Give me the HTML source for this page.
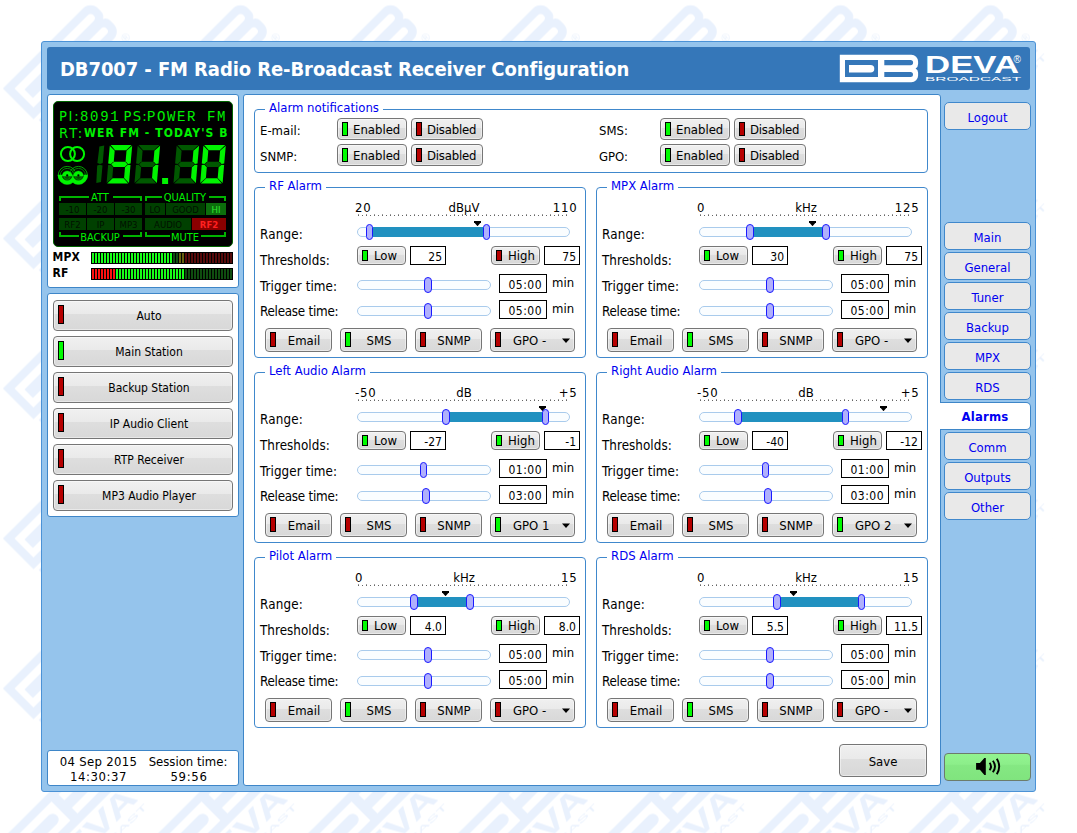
<!DOCTYPE html>
<html lang="en"><head><meta charset="utf-8"><title>DB7007 - FM Radio Re-Broadcast Receiver Configuration</title>
<style>
*{box-sizing:border-box;margin:0;padding:0}
html,body{width:1077px;height:833px;overflow:hidden;background:#fff}
body{position:relative;font-family:"DejaVu Sans Condensed","Liberation Sans",sans-serif;font-size:13px;color:#000;line-height:15px}
.abs,.abs *{position:absolute}
#bg{left:0;top:0;width:1077px;height:833px}
#wrap{left:41px;top:41px;width:995px;height:751px;border:1px solid #4b92d6;border-radius:3px;background:#95c4ec}
#hdr{left:47px;top:47px;width:983px;height:42.500px;background:#3577b9;border-radius:3px}
#title{left:60px;top:57px;font-size:20px;font-weight:bold;color:#fff;line-height:24px;white-space:nowrap;letter-spacing:-0.09px}
.panel{background:#fff;border:1px solid #3e86c8;border-radius:3px}
.t{white-space:nowrap;line-height:15px}
.btn{border:1px solid #767676;border-radius:4px;background:linear-gradient(#f0f0f0 0%,#eaeaea 44%,#dedede 45%,#d8d8d8 100%);box-shadow:inset 0 0 0 1px rgba(255,255,255,.45)}
.led{border:1px solid #000}
.g{background:#00fc00}
.r{background:#b60000}
.nav{left:944px;width:87px;height:28px;border:1px solid #4088cc;border-radius:5px;background:#e9e9e9;color:#0000f0;text-align:center;line-height:29px;position:absolute}
.fs{border:1px solid #4088cc;border-radius:4px}
.lg{background:#fff;color:#0000f0;padding:0 4px 0 4px;white-space:nowrap;line-height:15px;height:15px}
.inp{border:1px solid #000;background:#fff;text-align:right;font-size:12px;line-height:16px;padding-right:3px;padding-top:2px}
.trk{border:1px solid #a9cbec;border-radius:5px;background:#fafdff;height:10px}
.fill{background:#2191c0;height:10px}
.hd{width:8px;height:16px;border:1px solid #1a1aff;border-radius:4px;background:#b0b0fc}
.hd.n{width:7px;border-radius:3.5px}
.lbl{white-space:nowrap}
.lb{position:absolute;left:0;width:180px;height:31px;font-size:12px;text-align:center;padding-left:10px;line-height:31px}
</style></head>
<body>
<svg id="bg" class="abs" width="1077" height="833">
<defs><pattern id="wm" width="150" height="150" patternUnits="userSpaceOnUse" patternTransform="translate(2.9,-2.5)">
<g transform="translate(0,91) rotate(-45)" fill="#e9f1fd">
<path fill-rule="evenodd" d="M0 0H113.18A10.76 10.76 0 0 1 123.95 10.76V14.56Q123.95 19.31 119.99 21.53Q123.95 23.75 123.95 28.49V32.61A10.76 10.76 0 0 1 113.18 43.37H0Z M8.23 8.23V34.98H60.47V8.23Z M70.44 8.23V16.46H111.92A4.12 4.12 0 0 0 111.92 8.23Z M70.44 27.07V34.98H111.92A3.96 3.96 0 0 0 111.92 27.07Z"/><path d="M14.56 15.99H48.76A5.94 5.94 0 0 1 48.76 27.86H14.56Z"/>
<text x="0" y="68.500" font-family="'Liberation Sans',sans-serif" font-weight="bold" font-size="30.400" textLength="124" lengthAdjust="spacingAndGlyphs">DEVA</text>
<text x="0" y="80.300" font-family="'Liberation Sans',sans-serif" font-size="8" textLength="125" lengthAdjust="spacingAndGlyphs">BROADCAST</text>
<text x="118.500" y="54.800" font-family="'Liberation Sans',sans-serif" font-size="11.500">®</text>
</g>
</pattern></defs>
<rect x="2.900" y="0" width="1050" height="833" fill="url(#wm)"/></svg>
<div id="wrap" class="abs"></div>
<div id="hdr" class="abs"></div>
<div id="title" class="abs">DB7007 - FM Radio Re-Broadcast Receiver Configuration</div>
<svg class="abs" style="left:835px;top:48px" width="195" height="40">
<path fill="#fff" fill-rule="evenodd" d="M4.800 6.800H76.300A6.800 6.800 0 0 1 83.100 13.600V16Q83.100 19 80.600 20.400Q83.100 21.800 83.100 24.800V27.400A6.800 6.800 0 0 1 76.300 34.200H4.800Z M10 12V28.900H43V12Z M49.300 12V17.200H75.500A2.600 2.600 0 0 0 75.500 12Z M49.300 23.900V28.900H75.500A2.500 2.500 0 0 0 75.500 23.900Z"/>
<path fill="#fff" d="M14 16.900H35.600A3.700 3.750 0 0 1 35.600 24.400H14Z"/>
<text x="90.100" y="24.500" fill="#fff" font-family="'Liberation Sans',sans-serif" font-weight="bold" font-size="23" textLength="94" lengthAdjust="spacingAndGlyphs">DEVA</text>
<text x="90.100" y="33.300" fill="#fff" font-family="'Liberation Sans',sans-serif" font-size="6.200" textLength="96" lengthAdjust="spacingAndGlyphs">BROADCAST</text>
<text x="178.400" y="14.800" fill="#fff" font-family="'Liberation Sans',sans-serif" font-size="10">®</text>
</svg>
<div class="abs panel" style="left:47px;top:94px;width:192px;height:194px"></div>
<div class="abs panel" style="left:47px;top:293px;width:192px;height:224px"></div>
<div class="abs panel" style="left:47px;top:750px;width:192px;height:36px"></div>
<div class="abs panel" style="left:243px;top:94px;width:698px;height:692px"></div>
<div class="abs" style="left:53px;top:101px;width:180px;height:146px;background:#000;border:1px solid #006400;border-radius:5px"></div>
<div class="abs t" style="left:59px;top:106.500px;font-size:14.600px;line-height:17px;color:#00f000;letter-spacing:1.7px">PI:</div>
<div class="abs t" style="left:80px;top:109px;font-size:14px;line-height:17px;color:#00f000;font-family:'Liberation Mono',monospace;letter-spacing:1.7px">8091</div>
<div class="abs t" style="left:123.500px;top:106.500px;font-size:14.600px;line-height:17px;color:#00f000;letter-spacing:1.3px">PS:</div>
<div class="abs t" style="left:147px;top:109px;font-size:14px;line-height:17px;color:#00f000;font-family:'Liberation Mono',monospace;letter-spacing:1.6px;white-space:pre">POWER FM</div>
<div class="abs t" style="left:59px;top:124px;font-size:14.600px;line-height:17px;color:#00f000;letter-spacing:2.2px">RT:</div>
<div class="abs t" style="left:84px;top:126px;font-size:12px;line-height:15px;color:#00f000;font-weight:bold;letter-spacing:1.08px">WER FM - TODAY'S B</div>
<svg class="abs" style="left:53px;top:101px" width="180" height="146"><circle cx="14.9" cy="53.0" r="7" fill="none" stroke="#00f400" stroke-width="2"/><circle cx="24.1" cy="53.0" r="7" fill="none" stroke="#00f400" stroke-width="2"/><circle cx="14.2" cy="74.4" r="7" fill="none" stroke="#009000" stroke-width="0.9"/><circle cx="14.2" cy="74.4" r="9" fill="none" stroke="#00a800" stroke-width="1"/><circle cx="25.4" cy="74.4" r="7" fill="none" stroke="#009000" stroke-width="0.9"/><circle cx="25.4" cy="74.4" r="9" fill="none" stroke="#00a800" stroke-width="1"/><path d="M6.80 73.80A7.4 7.400 0 0 0 21.60 73.80" fill="none" stroke="#00f400" stroke-width="4.200"/><path d="M18.00 73.80A7.4 7.400 0 0 0 32.80 73.80" fill="none" stroke="#00f400" stroke-width="4.200"/><circle cx="14.2" cy="74.4" r="5.2" fill="#005000"/><path d="M11.20 75.40A3 3 0 0 0 17.20 75.40" fill="none" stroke="#008800" stroke-width="0.800"/><path d="M9.00 75.20A5.2 5.200 0 0 1 19.40 75.20Z" fill="#00f400"/><circle cx="14.2" cy="74.4" r="1.1" fill="#000"/><circle cx="25.4" cy="74.4" r="5.2" fill="#005000"/><path d="M22.40 75.40A3 3 0 0 0 28.40 75.40" fill="none" stroke="#008800" stroke-width="0.800"/><path d="M20.20 75.20A5.2 5.200 0 0 1 30.60 75.20Z" fill="#00f400"/><circle cx="25.4" cy="74.4" r="1.1" fill="#000"/><polygon points="46.4,45.5 51.2,44.6 49.7,62.1 47.0,62.9 44.4,62.1" fill="#005800"/><polygon points="44.2,64.5 46.9,63.7 49.5,64.5 48.0,81.1 43.3,82.0" fill="#005800"/><polygon points="57.6,44.0 78.6,44.0 73.2,49.3 62.1,49.3" fill="#00f400"/><polygon points="59.6,77.3 70.7,77.3 75.2,82.6 54.2,82.6" fill="#00f400"/><polygon points="56.8,44.7 61.7,49.7 60.8,60.3 57.9,62.9 55.2,62.6" fill="#00f400"/><polygon points="55.1,64.0 57.8,63.7 60.2,66.3 59.3,76.9 53.6,81.9" fill="#005800"/><polygon points="79.2,44.7 77.6,62.6 75.0,62.9 72.6,60.3 73.5,49.7" fill="#00f400"/><polygon points="77.5,64.0 76.0,81.9 71.1,76.9 72.0,66.3 74.9,63.7" fill="#00f400"/><polygon points="58.2,63.3 61.1,60.7 72.2,60.7 74.6,63.3 71.7,65.9 60.6,65.9" fill="#00f400"/><polygon points="85.5,44.0 106.5,44.0 101.1,49.3 90.0,49.3" fill="#005800"/><polygon points="87.5,77.3 98.6,77.3 103.1,82.6 82.1,82.6" fill="#005800"/><polygon points="84.7,44.7 89.6,49.7 88.7,60.3 85.8,62.9 83.1,62.6" fill="#005800"/><polygon points="83.0,64.0 85.7,63.7 88.1,66.3 87.2,76.9 81.5,81.9" fill="#005800"/><polygon points="107.1,44.7 105.5,62.6 102.9,62.9 100.5,60.3 101.4,49.7" fill="#00f400"/><polygon points="105.4,64.0 103.9,81.9 99.0,76.9 99.9,66.3 102.8,63.7" fill="#00f400"/><polygon points="86.1,63.3 89.0,60.7 100.1,60.7 102.5,63.3 99.6,65.9 88.5,65.9" fill="#005800"/><rect x="109.1" y="77.0" width="6" height="6" fill="#00f400"/><polygon points="124.5,44.0 145.5,44.0 140.1,49.3 129.0,49.3" fill="#005800"/><polygon points="126.5,77.3 137.6,77.3 142.1,82.6 121.1,82.6" fill="#005800"/><polygon points="123.7,44.7 128.6,49.7 127.7,60.3 124.8,62.9 122.1,62.6" fill="#005800"/><polygon points="122.0,64.0 124.7,63.7 127.1,66.3 126.2,76.9 120.5,81.9" fill="#005800"/><polygon points="146.1,44.7 144.5,62.6 141.9,62.9 139.5,60.3 140.4,49.7" fill="#00f400"/><polygon points="144.4,64.0 142.9,81.9 138.0,76.9 138.9,66.3 141.8,63.7" fill="#00f400"/><polygon points="125.1,63.3 128.0,60.7 139.1,60.7 141.5,63.3 138.6,65.9 127.5,65.9" fill="#005800"/><polygon points="151.2,44.0 172.2,44.0 166.8,49.3 155.7,49.3" fill="#00f400"/><polygon points="153.2,77.3 164.3,77.3 168.8,82.6 147.8,82.6" fill="#00f400"/><polygon points="150.4,44.7 155.3,49.7 154.4,60.3 151.5,62.9 148.8,62.6" fill="#00f400"/><polygon points="148.7,64.0 151.4,63.7 153.8,66.3 152.9,76.9 147.2,81.9" fill="#00f400"/><polygon points="172.8,44.7 171.2,62.6 168.6,62.9 166.2,60.3 167.1,49.7" fill="#00f400"/><polygon points="171.1,64.0 169.6,81.9 164.7,76.9 165.6,66.3 168.5,63.7" fill="#00f400"/><polygon points="151.8,63.3 154.7,60.7 165.8,60.7 168.2,63.3 165.3,65.9 154.2,65.9" fill="#005800"/><text x="60" y="80" font-size="30" font-family="'Liberation Mono',monospace" font-weight="bold" fill="#00f400" fill-opacity="0.02" textLength="120">91.10</text><path d="M7.0 100.0V96.0H36.0M60.0 96.0H88.0V100.0" fill="none" stroke="#00b400" stroke-width="2"/><path d="M93.0 100.0V96.0H109.0M156.0 96.0H172.0V100.0" fill="none" stroke="#00b400" stroke-width="2"/><path d="M7.0 131.0V135.0H26.0M70.0 135.0H88.0V131.0" fill="none" stroke="#00b400" stroke-width="2"/><path d="M93.0 131.0V135.0H117.0M148.0 135.0H172.0V131.0" fill="none" stroke="#00b400" stroke-width="2"/></svg>
<div class="abs t" style="left:60px;top:191px;width:80px;text-align:center;font-size:11px;line-height:13px;color:#00f000">ATT</div>
<div class="abs t" style="left:145px;top:191px;width:80px;text-align:center;font-size:11px;line-height:13px;color:#00f000">QUALITY</div>
<div class="abs t" style="left:60px;top:231px;width:80px;text-align:center;font-size:11px;line-height:13px;color:#00f000">BACKUP</div>
<div class="abs t" style="left:145px;top:231px;width:80px;text-align:center;font-size:11px;line-height:13px;color:#00f000">MUTE</div>
<div class="abs t" style="left:59px;top:203px;width:27px;height:12px;background:#004000;color:#001000;font-size:9.500px;line-height:14px;text-align:center;overflow:hidden;">-10</div>
<div class="abs t" style="left:87px;top:203px;width:27px;height:12px;background:#004000;color:#001000;font-size:9.500px;line-height:14px;text-align:center;overflow:hidden;">-20</div>
<div class="abs t" style="left:115px;top:203px;width:27px;height:12px;background:#004000;color:#001000;font-size:9.500px;line-height:14px;text-align:center;overflow:hidden;">-30</div>
<div class="abs t" style="left:145px;top:203px;width:20px;height:12px;background:#004000;color:#001000;font-size:9.500px;line-height:14px;text-align:center;overflow:hidden;">LO</div>
<div class="abs t" style="left:166px;top:203px;width:39px;height:12px;background:#004000;color:#001000;font-size:9.500px;line-height:14px;text-align:center;overflow:hidden;">GOOD</div>
<div class="abs t" style="left:206px;top:203px;width:20px;height:12px;background:#0c6e0c;color:#30e830;font-size:9.500px;line-height:14px;text-align:center;overflow:hidden;">HI</div>
<div class="abs t" style="left:59px;top:218px;width:27px;height:12px;background:#004000;color:#001000;font-size:9.500px;line-height:14px;text-align:center;overflow:hidden;">RF2</div>
<div class="abs t" style="left:87px;top:218px;width:27px;height:12px;background:#004000;color:#001000;font-size:9.500px;line-height:14px;text-align:center;overflow:hidden;">IP</div>
<div class="abs t" style="left:115px;top:218px;width:27px;height:12px;background:#004000;color:#001000;font-size:9.500px;line-height:14px;text-align:center;overflow:hidden;">MP3</div>
<div class="abs t" style="left:145px;top:218px;width:46px;height:12px;background:#004000;color:#001000;font-size:9.500px;line-height:14px;text-align:center;overflow:hidden;">AUDIO</div>
<div class="abs t" style="left:192px;top:218px;width:34px;height:12px;background:#8a0000;color:#ff2020;font-size:9.500px;line-height:14px;text-align:center;overflow:hidden;font-weight:bold;">RF2</div>
<div class="abs t" style="left:52.500px;top:250px;font-size:12px;font-weight:bold;letter-spacing:0.2px">MPX</div>
<div class="abs" style="left:91px;top:252px;width:142px;height:12px;background:#000"></div><svg class="abs" style="left:91px;top:252px" width="142" height="12"><rect x="1" y="1" width="2" height="10" fill="#18ff18"/><rect x="4" y="1" width="2" height="10" fill="#18ff18"/><rect x="7" y="1" width="2" height="10" fill="#18ff18"/><rect x="10" y="1" width="2" height="10" fill="#18ff18"/><rect x="13" y="1" width="2" height="10" fill="#18ff18"/><rect x="16" y="1" width="2" height="10" fill="#18ff18"/><rect x="19" y="1" width="2" height="10" fill="#18ff18"/><rect x="22" y="1" width="2" height="10" fill="#18ff18"/><rect x="25" y="1" width="2" height="10" fill="#18ff18"/><rect x="28" y="1" width="2" height="10" fill="#18ff18"/><rect x="31" y="1" width="2" height="10" fill="#18ff18"/><rect x="34" y="1" width="2" height="10" fill="#18ff18"/><rect x="37" y="1" width="2" height="10" fill="#18ff18"/><rect x="40" y="1" width="2" height="10" fill="#18ff18"/><rect x="43" y="1" width="2" height="10" fill="#18ff18"/><rect x="46" y="1" width="2" height="10" fill="#18ff18"/><rect x="49" y="1" width="2" height="10" fill="#18ff18"/><rect x="52" y="1" width="2" height="10" fill="#18ff18"/><rect x="55" y="1" width="2" height="10" fill="#18ff18"/><rect x="58" y="1" width="2" height="10" fill="#18ff18"/><rect x="61" y="1" width="2" height="10" fill="#18ff18"/><rect x="64" y="1" width="2" height="10" fill="#18ff18"/><rect x="67" y="1" width="2" height="10" fill="#18ff18"/><rect x="70" y="1" width="2" height="10" fill="#18ff18"/><rect x="73" y="1" width="2" height="10" fill="#18ff18"/><rect x="76" y="1" width="2" height="10" fill="#18ff18"/><rect x="79" y="1" width="2" height="10" fill="#18ff18"/><rect x="82" y="1" width="2" height="10" fill="#0f4d0f"/><rect x="85" y="1" width="2" height="10" fill="#0f4d0f"/><rect x="88" y="1" width="2" height="10" fill="#68600e"/><rect x="91" y="1" width="2" height="10" fill="#68600e"/><rect x="94" y="1" width="2" height="10" fill="#560a0a"/><rect x="97" y="1" width="2" height="10" fill="#560a0a"/><rect x="100" y="1" width="2" height="10" fill="#560a0a"/><rect x="103" y="1" width="2" height="10" fill="#560a0a"/><rect x="106" y="1" width="2" height="10" fill="#560a0a"/><rect x="109" y="1" width="2" height="10" fill="#560a0a"/><rect x="112" y="1" width="2" height="10" fill="#560a0a"/><rect x="115" y="1" width="2" height="10" fill="#560a0a"/><rect x="118" y="1" width="2" height="10" fill="#560a0a"/><rect x="121" y="1" width="2" height="10" fill="#560a0a"/><rect x="124" y="1" width="2" height="10" fill="#560a0a"/><rect x="127" y="1" width="2" height="10" fill="#560a0a"/><rect x="130" y="1" width="2" height="10" fill="#560a0a"/><rect x="133" y="1" width="2" height="10" fill="#560a0a"/><rect x="136" y="1" width="2" height="10" fill="#560a0a"/><rect x="139" y="1" width="2" height="10" fill="#560a0a"/></svg>
<div class="abs t" style="left:52.500px;top:266px;font-size:12px;font-weight:bold;letter-spacing:0.2px">RF</div>
<div class="abs" style="left:91px;top:268px;width:142px;height:12px;background:#000"></div><svg class="abs" style="left:91px;top:268px" width="142" height="12"><rect x="1" y="1" width="2" height="10" fill="#ff1010"/><rect x="4" y="1" width="2" height="10" fill="#ff1010"/><rect x="7" y="1" width="2" height="10" fill="#ff1010"/><rect x="10" y="1" width="2" height="10" fill="#ff1010"/><rect x="13" y="1" width="2" height="10" fill="#ff1010"/><rect x="16" y="1" width="2" height="10" fill="#ff1010"/><rect x="19" y="1" width="2" height="10" fill="#ff1010"/><rect x="22" y="1" width="2" height="10" fill="#ff1010"/><rect x="25" y="1" width="2" height="10" fill="#18ff18"/><rect x="28" y="1" width="2" height="10" fill="#18ff18"/><rect x="31" y="1" width="2" height="10" fill="#18ff18"/><rect x="34" y="1" width="2" height="10" fill="#18ff18"/><rect x="37" y="1" width="2" height="10" fill="#18ff18"/><rect x="40" y="1" width="2" height="10" fill="#18ff18"/><rect x="43" y="1" width="2" height="10" fill="#18ff18"/><rect x="46" y="1" width="2" height="10" fill="#18ff18"/><rect x="49" y="1" width="2" height="10" fill="#18ff18"/><rect x="52" y="1" width="2" height="10" fill="#18ff18"/><rect x="55" y="1" width="2" height="10" fill="#18ff18"/><rect x="58" y="1" width="2" height="10" fill="#18ff18"/><rect x="61" y="1" width="2" height="10" fill="#18ff18"/><rect x="64" y="1" width="2" height="10" fill="#18ff18"/><rect x="67" y="1" width="2" height="10" fill="#18ff18"/><rect x="70" y="1" width="2" height="10" fill="#18ff18"/><rect x="73" y="1" width="2" height="10" fill="#18ff18"/><rect x="76" y="1" width="2" height="10" fill="#18ff18"/><rect x="79" y="1" width="2" height="10" fill="#18ff18"/><rect x="82" y="1" width="2" height="10" fill="#18ff18"/><rect x="85" y="1" width="2" height="10" fill="#18ff18"/><rect x="88" y="1" width="2" height="10" fill="#18ff18"/><rect x="91" y="1" width="2" height="10" fill="#18ff18"/><rect x="94" y="1" width="2" height="10" fill="#0f4d0f"/><rect x="97" y="1" width="2" height="10" fill="#0f4d0f"/><rect x="100" y="1" width="2" height="10" fill="#0f4d0f"/><rect x="103" y="1" width="2" height="10" fill="#0f4d0f"/><rect x="106" y="1" width="2" height="10" fill="#0f4d0f"/><rect x="109" y="1" width="2" height="10" fill="#0f4d0f"/><rect x="112" y="1" width="2" height="10" fill="#0f4d0f"/><rect x="115" y="1" width="2" height="10" fill="#0f4d0f"/><rect x="118" y="1" width="2" height="10" fill="#0f4d0f"/><rect x="121" y="1" width="2" height="10" fill="#0f4d0f"/><rect x="124" y="1" width="2" height="10" fill="#0f4d0f"/><rect x="127" y="1" width="2" height="10" fill="#0f4d0f"/><rect x="130" y="1" width="2" height="10" fill="#0f4d0f"/><rect x="133" y="1" width="2" height="10" fill="#0f4d0f"/><rect x="136" y="1" width="2" height="10" fill="#0f4d0f"/><rect x="139" y="1" width="2" height="10" fill="#0f4d0f"/></svg>
<div class="abs btn" style="left:53px;top:300px;width:180px;height:31px"><div class="led r" style="left:4px;top:4px;width:6px;height:19px"></div><div class="lb" style="top:0">Auto</div></div>
<div class="abs btn" style="left:53px;top:336px;width:180px;height:31px"><div class="led g" style="left:4px;top:4px;width:6px;height:19px"></div><div class="lb" style="top:0">Main Station</div></div>
<div class="abs btn" style="left:53px;top:372px;width:180px;height:31px"><div class="led r" style="left:4px;top:4px;width:6px;height:19px"></div><div class="lb" style="top:0">Backup Station</div></div>
<div class="abs btn" style="left:53px;top:408px;width:180px;height:31px"><div class="led r" style="left:4px;top:4px;width:6px;height:19px"></div><div class="lb" style="top:0">IP Audio Client</div></div>
<div class="abs btn" style="left:53px;top:444px;width:180px;height:31px"><div class="led r" style="left:4px;top:4px;width:6px;height:19px"></div><div class="lb" style="top:0">RTP Receiver</div></div>
<div class="abs btn" style="left:53px;top:480px;width:180px;height:31px"><div class="led r" style="left:4px;top:4px;width:6px;height:19px"></div><div class="lb" style="top:0">MP3 Audio Player</div></div>
<div class="abs t" style="left:47px;top:754px;width:103px;text-align:center;letter-spacing:0.3px">04 Sep 2015</div>
<div class="abs t" style="left:47px;top:769px;width:103px;text-align:center;letter-spacing:0.55px">14:30:37</div>
<div class="abs t" style="left:137px;top:754px;width:102px;text-align:center">Session time:</div>
<div class="abs t" style="left:137px;top:769px;width:104px;text-align:center;letter-spacing:0.7px">59:56</div>
<div class="nav" style="top:102px">Logout</div>
<div class="nav" style="top:222px">Main</div>
<div class="nav" style="top:252px">General</div>
<div class="nav" style="top:282px">Tuner</div>
<div class="nav" style="top:312px">Backup</div>
<div class="nav" style="top:342px">MPX</div>
<div class="nav" style="top:372px">RDS</div>
<div class="abs" style="left:940px;top:402px;width:91px;height:28px;border:1px solid #3e86c8;border-left:none;border-radius:0 5px 5px 0;background:#fff;color:#0000f0;font-weight:bold;text-align:center;line-height:28px;padding-left:0px;letter-spacing:0.2px">Alarms</div>
<div class="nav" style="top:432px">Comm</div>
<div class="nav" style="top:462px">Outputs</div>
<div class="nav" style="top:492px">Other</div>
<div class="abs" style="left:944px;top:753px;width:87px;height:28px;border:1px solid #6c7c6c;border-radius:4px;background:linear-gradient(#92f490 0%,#8cee8a 40%,#85e883 42%,#80e47e 100%)"></div>
<svg class="abs" style="left:975px;top:757px" width="27" height="19">
<path d="M1.100 6H4.900L9.400 1.100H10.800V17.900H9.400L4.900 12.800H1.100Z" fill="#000"/>
<path d="M14.600 5.800Q17.400 9.500 14.600 13.200" fill="none" stroke="#000" stroke-width="1.900"/>
<path d="M17.800 3.700Q22.200 9.500 17.800 15.300" fill="none" stroke="#000" stroke-width="1.900"/>
<path d="M21.800 1.700Q26.600 9.500 21.800 17.300" fill="none" stroke="#000" stroke-width="1.900"/>
</svg>
<div class="abs btn" style="left:839px;top:744px;width:88px;height:33px;text-align:center;line-height:33px">Save</div>
<div class="abs fs" style="left:254px;top:109px;width:674px;height:64px"></div>
<div class="abs lg" style="left:265px;top:100px">Alarm notifications</div>
<div class="abs t" style="left:260px;top:123px">E-mail:</div>
<div class="abs t" style="left:260px;top:149px">SNMP:</div>
<div class="abs t" style="left:599px;top:123px">SMS:</div>
<div class="abs t" style="left:599px;top:149px">GPO:</div>
<div class="abs btn" style="left:337px;top:118px;width:70px;height:22px"><div class="led g" style="left:4px;top:3px;width:6px;height:14px"></div><div class="lbl" style="left:15px;top:3px;line-height:15px;">Enabled</div></div>
<div class="abs btn" style="left:411px;top:118px;width:72px;height:22px"><div class="led r" style="left:4px;top:3px;width:6px;height:14px"></div><div class="lbl" style="left:15px;top:3px;line-height:15px;letter-spacing:-0.2px">Disabled</div></div>
<div class="abs btn" style="left:337px;top:144px;width:70px;height:22px"><div class="led g" style="left:4px;top:3px;width:6px;height:14px"></div><div class="lbl" style="left:15px;top:3px;line-height:15px;">Enabled</div></div>
<div class="abs btn" style="left:411px;top:144px;width:72px;height:22px"><div class="led r" style="left:4px;top:3px;width:6px;height:14px"></div><div class="lbl" style="left:15px;top:3px;line-height:15px;letter-spacing:-0.2px">Disabled</div></div>
<div class="abs btn" style="left:660px;top:118px;width:70px;height:22px"><div class="led g" style="left:4px;top:3px;width:6px;height:14px"></div><div class="lbl" style="left:15px;top:3px;line-height:15px;">Enabled</div></div>
<div class="abs btn" style="left:734px;top:118px;width:72px;height:22px"><div class="led r" style="left:4px;top:3px;width:6px;height:14px"></div><div class="lbl" style="left:15px;top:3px;line-height:15px;letter-spacing:-0.2px">Disabled</div></div>
<div class="abs btn" style="left:660px;top:144px;width:70px;height:22px"><div class="led g" style="left:4px;top:3px;width:6px;height:14px"></div><div class="lbl" style="left:15px;top:3px;line-height:15px;">Enabled</div></div>
<div class="abs btn" style="left:734px;top:144px;width:72px;height:22px"><div class="led r" style="left:4px;top:3px;width:6px;height:14px"></div><div class="lbl" style="left:15px;top:3px;line-height:15px;letter-spacing:-0.2px">Disabled</div></div>
<div class="abs" style="left:254px;top:187px;width:332px;height:171px"><div class="fs" style="left:0;top:0;width:332px;height:171px"></div><div class="lg" style="left:11px;top:-9px">RF Alarm</div><div class="lbl" style="left:101px;top:13px;letter-spacing:0.8px">20</div><div class="lbl" style="left:160px;top:13px;width:100px;text-align:center">dBµV</div><div class="lbl" style="left:223.500px;top:13px;width:100px;text-align:right;letter-spacing:0.8px">110</div><div style="left:104px;top:28px;width:210px;height:1px;background:repeating-linear-gradient(90deg,#666 0 1px,transparent 1px 4px)"></div><div style="left:104px;top:27px;width:210px;height:1px;background:repeating-linear-gradient(90deg,#999 0 1px,transparent 1px 8px)"></div><svg style="left:220.0px;top:34px" width="7" height="5"><path d="M0 0H7V1.300L3.500 5.200L0 1.300Z" fill="#000"/></svg><div class="lbl" style="left:6px;top:40px;font-size:13.300px;letter-spacing:0.15px">Range:</div><div class="lbl" style="left:6px;top:66px;font-size:13.300px;letter-spacing:0.05px">Thresholds:</div><div class="lbl" style="left:6px;top:92px;font-size:13.300px;letter-spacing:0.1px">Trigger time:</div><div class="lbl" style="left:6px;top:117px;font-size:13.300px;letter-spacing:-0.25px">Release time:</div><div class="trk" style="left:103px;top:40px;width:213px"></div><div class="fill" style="left:115.5px;top:40px;width:117.0px"></div><div class="hd" style="left:112.0px;top:37px;width:7px;border-radius:3.5px"></div><div class="hd" style="left:229.0px;top:37px;width:7px;border-radius:3.5px"></div><div class="btn" style="left:103px;top:59px;width:49px;height:19px"><div class="led g" style="left:4px;top:3px;width:6px;height:11px"></div><div class="lbl" style="left:16px;top:1px;line-height:15px">Low</div></div><div class="inp" style="left:156px;top:59px;width:36px;height:19px">25</div><div class="btn" style="left:237px;top:59px;width:49px;height:19px"><div class="led r" style="left:4px;top:3px;width:6px;height:11px"></div><div class="lbl" style="left:16px;top:1px;line-height:15px">High</div></div><div class="inp" style="left:290px;top:59px;width:36px;height:19px">75</div><div class="trk" style="left:103px;top:93px;width:134px"></div><div class="hd" style="left:170.0px;top:90px;width:8px;border-radius:4.0px"></div><div class="inp" style="left:245px;top:87px;width:48px;height:19px;padding-right:4px;letter-spacing:0.5px">05:00</div><div class="lbl" style="left:298px;top:88px">min</div><div class="trk" style="left:103px;top:119px;width:134px"></div><div class="hd" style="left:170.0px;top:116px;width:8px;border-radius:4.0px"></div><div class="inp" style="left:245px;top:113px;width:48px;height:19px;padding-right:4px;letter-spacing:0.5px">05:00</div><div class="lbl" style="left:298px;top:114px">min</div><div class="btn" style="left:11px;top:141px;width:67px;height:24px"><div class="led r" style="left:4px;top:3px;width:6px;height:15px"></div><div class="lbl" style="left:11px;top:4px;width:54px;text-align:center;line-height:15px">Email</div></div><div class="btn" style="left:86px;top:141px;width:67px;height:24px"><div class="led g" style="left:4px;top:3px;width:6px;height:15px"></div><div class="lbl" style="left:11px;top:4px;width:54px;text-align:center;line-height:15px">SMS</div></div><div class="btn" style="left:161px;top:141px;width:67px;height:24px"><div class="led r" style="left:4px;top:3px;width:6px;height:15px"></div><div class="lbl" style="left:11px;top:4px;width:54px;text-align:center;line-height:15px">SNMP</div></div><div class="btn" style="left:236px;top:141px;width:85px;height:24px"><div class="led r" style="left:4px;top:3px;width:6px;height:15px"></div><div class="lbl" style="left:22px;top:4px;line-height:15px">GPO -</div><svg style="left:71px;top:9px" width="8" height="6"><path d="M0 0.500H8L4 5Z" fill="#000"/></svg></div></div>
<div class="abs" style="left:596px;top:187px;width:332px;height:171px"><div class="fs" style="left:0;top:0;width:332px;height:171px"></div><div class="lg" style="left:11px;top:-9px">MPX Alarm</div><div class="lbl" style="left:101px;top:13px;letter-spacing:0.8px">0</div><div class="lbl" style="left:160px;top:13px;width:100px;text-align:center">kHz</div><div class="lbl" style="left:223.500px;top:13px;width:100px;text-align:right;letter-spacing:0.8px">125</div><div style="left:104px;top:28px;width:210px;height:1px;background:repeating-linear-gradient(90deg,#666 0 1px,transparent 1px 4px)"></div><div style="left:104px;top:27px;width:210px;height:1px;background:repeating-linear-gradient(90deg,#999 0 1px,transparent 1px 8px)"></div><svg style="left:213.0px;top:34px" width="7" height="5"><path d="M0 0H7V1.300L3.500 5.200L0 1.300Z" fill="#000"/></svg><div class="lbl" style="left:6px;top:40px;font-size:13.300px;letter-spacing:0.15px">Range:</div><div class="lbl" style="left:6px;top:66px;font-size:13.300px;letter-spacing:0.05px">Thresholds:</div><div class="lbl" style="left:6px;top:92px;font-size:13.300px;letter-spacing:0.1px">Trigger time:</div><div class="lbl" style="left:6px;top:117px;font-size:13.300px;letter-spacing:-0.25px">Release time:</div><div class="trk" style="left:103px;top:40px;width:213px"></div><div class="fill" style="left:154.0px;top:40px;width:76.0px"></div><div class="hd" style="left:150.0px;top:37px;width:8px;border-radius:4.0px"></div><div class="hd" style="left:226.0px;top:37px;width:8px;border-radius:4.0px"></div><div class="btn" style="left:103px;top:59px;width:49px;height:19px"><div class="led g" style="left:4px;top:3px;width:6px;height:11px"></div><div class="lbl" style="left:16px;top:1px;line-height:15px">Low</div></div><div class="inp" style="left:156px;top:59px;width:36px;height:19px">30</div><div class="btn" style="left:237px;top:59px;width:49px;height:19px"><div class="led g" style="left:4px;top:3px;width:6px;height:11px"></div><div class="lbl" style="left:16px;top:1px;line-height:15px">High</div></div><div class="inp" style="left:290px;top:59px;width:36px;height:19px">75</div><div class="trk" style="left:103px;top:93px;width:134px"></div><div class="hd" style="left:170.0px;top:90px;width:8px;border-radius:4.0px"></div><div class="inp" style="left:245px;top:87px;width:48px;height:19px;padding-right:4px;letter-spacing:0.5px">05:00</div><div class="lbl" style="left:298px;top:88px">min</div><div class="trk" style="left:103px;top:119px;width:134px"></div><div class="hd" style="left:170.0px;top:116px;width:8px;border-radius:4.0px"></div><div class="inp" style="left:245px;top:113px;width:48px;height:19px;padding-right:4px;letter-spacing:0.5px">05:00</div><div class="lbl" style="left:298px;top:114px">min</div><div class="btn" style="left:11px;top:141px;width:67px;height:24px"><div class="led r" style="left:4px;top:3px;width:6px;height:15px"></div><div class="lbl" style="left:11px;top:4px;width:54px;text-align:center;line-height:15px">Email</div></div><div class="btn" style="left:86px;top:141px;width:67px;height:24px"><div class="led g" style="left:4px;top:3px;width:6px;height:15px"></div><div class="lbl" style="left:11px;top:4px;width:54px;text-align:center;line-height:15px">SMS</div></div><div class="btn" style="left:161px;top:141px;width:67px;height:24px"><div class="led r" style="left:4px;top:3px;width:6px;height:15px"></div><div class="lbl" style="left:11px;top:4px;width:54px;text-align:center;line-height:15px">SNMP</div></div><div class="btn" style="left:236px;top:141px;width:85px;height:24px"><div class="led r" style="left:4px;top:3px;width:6px;height:15px"></div><div class="lbl" style="left:22px;top:4px;line-height:15px">GPO -</div><svg style="left:71px;top:9px" width="8" height="6"><path d="M0 0.500H8L4 5Z" fill="#000"/></svg></div></div>
<div class="abs" style="left:254px;top:372px;width:332px;height:171px"><div class="fs" style="left:0;top:0;width:332px;height:171px"></div><div class="lg" style="left:11px;top:-9px">Left Audio Alarm</div><div class="lbl" style="left:101px;top:13px;letter-spacing:0.8px">-50</div><div class="lbl" style="left:160px;top:13px;width:100px;text-align:center">dB</div><div class="lbl" style="left:223.500px;top:13px;width:100px;text-align:right;letter-spacing:0.8px">+5</div><div style="left:104px;top:28px;width:210px;height:1px;background:repeating-linear-gradient(90deg,#666 0 1px,transparent 1px 4px)"></div><div style="left:104px;top:27px;width:210px;height:1px;background:repeating-linear-gradient(90deg,#999 0 1px,transparent 1px 8px)"></div><svg style="left:285.0px;top:34px" width="7" height="5"><path d="M0 0H7V1.300L3.500 5.200L0 1.300Z" fill="#000"/></svg><div class="lbl" style="left:6px;top:40px;font-size:13.300px;letter-spacing:0.15px">Range:</div><div class="lbl" style="left:6px;top:66px;font-size:13.300px;letter-spacing:0.05px">Thresholds:</div><div class="lbl" style="left:6px;top:92px;font-size:13.300px;letter-spacing:0.1px">Trigger time:</div><div class="lbl" style="left:6px;top:117px;font-size:13.300px;letter-spacing:-0.25px">Release time:</div><div class="trk" style="left:103px;top:40px;width:213px"></div><div class="fill" style="left:192.0px;top:40px;width:99.5px"></div><div class="hd" style="left:188.0px;top:37px;width:8px;border-radius:4.0px"></div><div class="hd" style="left:288.0px;top:37px;width:7px;border-radius:3.5px"></div><div class="btn" style="left:103px;top:59px;width:49px;height:19px"><div class="led g" style="left:4px;top:3px;width:6px;height:11px"></div><div class="lbl" style="left:16px;top:1px;line-height:15px">Low</div></div><div class="inp" style="left:156px;top:59px;width:36px;height:19px">-27</div><div class="btn" style="left:237px;top:59px;width:49px;height:19px"><div class="led g" style="left:4px;top:3px;width:6px;height:11px"></div><div class="lbl" style="left:16px;top:1px;line-height:15px">High</div></div><div class="inp" style="left:290px;top:59px;width:36px;height:19px">-1</div><div class="trk" style="left:103px;top:93px;width:134px"></div><div class="hd" style="left:166.0px;top:90px;width:7px;border-radius:3.5px"></div><div class="inp" style="left:245px;top:87px;width:48px;height:19px;padding-right:4px;letter-spacing:0.5px">01:00</div><div class="lbl" style="left:298px;top:88px">min</div><div class="trk" style="left:103px;top:119px;width:134px"></div><div class="hd" style="left:168.0px;top:116px;width:8px;border-radius:4.0px"></div><div class="inp" style="left:245px;top:113px;width:48px;height:19px;padding-right:4px;letter-spacing:0.5px">03:00</div><div class="lbl" style="left:298px;top:114px">min</div><div class="btn" style="left:11px;top:141px;width:67px;height:24px"><div class="led r" style="left:4px;top:3px;width:6px;height:15px"></div><div class="lbl" style="left:11px;top:4px;width:54px;text-align:center;line-height:15px">Email</div></div><div class="btn" style="left:86px;top:141px;width:67px;height:24px"><div class="led r" style="left:4px;top:3px;width:6px;height:15px"></div><div class="lbl" style="left:11px;top:4px;width:54px;text-align:center;line-height:15px">SMS</div></div><div class="btn" style="left:161px;top:141px;width:67px;height:24px"><div class="led r" style="left:4px;top:3px;width:6px;height:15px"></div><div class="lbl" style="left:11px;top:4px;width:54px;text-align:center;line-height:15px">SNMP</div></div><div class="btn" style="left:236px;top:141px;width:85px;height:24px"><div class="led g" style="left:4px;top:3px;width:6px;height:15px"></div><div class="lbl" style="left:22px;top:4px;line-height:15px">GPO 1</div><svg style="left:71px;top:9px" width="8" height="6"><path d="M0 0.500H8L4 5Z" fill="#000"/></svg></div></div>
<div class="abs" style="left:596px;top:372px;width:332px;height:171px"><div class="fs" style="left:0;top:0;width:332px;height:171px"></div><div class="lg" style="left:11px;top:-9px">Right Audio Alarm</div><div class="lbl" style="left:101px;top:13px;letter-spacing:0.8px">-50</div><div class="lbl" style="left:160px;top:13px;width:100px;text-align:center">dB</div><div class="lbl" style="left:223.500px;top:13px;width:100px;text-align:right;letter-spacing:0.8px">+5</div><div style="left:104px;top:28px;width:210px;height:1px;background:repeating-linear-gradient(90deg,#666 0 1px,transparent 1px 4px)"></div><div style="left:104px;top:27px;width:210px;height:1px;background:repeating-linear-gradient(90deg,#999 0 1px,transparent 1px 8px)"></div><svg style="left:284.0px;top:34px" width="7" height="5"><path d="M0 0H7V1.300L3.500 5.200L0 1.300Z" fill="#000"/></svg><div class="lbl" style="left:6px;top:40px;font-size:13.300px;letter-spacing:0.15px">Range:</div><div class="lbl" style="left:6px;top:66px;font-size:13.300px;letter-spacing:0.05px">Thresholds:</div><div class="lbl" style="left:6px;top:92px;font-size:13.300px;letter-spacing:0.1px">Trigger time:</div><div class="lbl" style="left:6px;top:117px;font-size:13.300px;letter-spacing:-0.25px">Release time:</div><div class="trk" style="left:103px;top:40px;width:213px"></div><div class="fill" style="left:142.0px;top:40px;width:107.5px"></div><div class="hd" style="left:138.0px;top:37px;width:8px;border-radius:4.0px"></div><div class="hd" style="left:246.0px;top:37px;width:7px;border-radius:3.5px"></div><div class="btn" style="left:103px;top:59px;width:49px;height:19px"><div class="led g" style="left:4px;top:3px;width:6px;height:11px"></div><div class="lbl" style="left:16px;top:1px;line-height:15px">Low</div></div><div class="inp" style="left:156px;top:59px;width:36px;height:19px">-40</div><div class="btn" style="left:237px;top:59px;width:49px;height:19px"><div class="led g" style="left:4px;top:3px;width:6px;height:11px"></div><div class="lbl" style="left:16px;top:1px;line-height:15px">High</div></div><div class="inp" style="left:290px;top:59px;width:36px;height:19px">-12</div><div class="trk" style="left:103px;top:93px;width:134px"></div><div class="hd" style="left:166.0px;top:90px;width:7px;border-radius:3.5px"></div><div class="inp" style="left:245px;top:87px;width:48px;height:19px;padding-right:4px;letter-spacing:0.5px">01:00</div><div class="lbl" style="left:298px;top:88px">min</div><div class="trk" style="left:103px;top:119px;width:134px"></div><div class="hd" style="left:168.0px;top:116px;width:8px;border-radius:4.0px"></div><div class="inp" style="left:245px;top:113px;width:48px;height:19px;padding-right:4px;letter-spacing:0.5px">03:00</div><div class="lbl" style="left:298px;top:114px">min</div><div class="btn" style="left:11px;top:141px;width:67px;height:24px"><div class="led r" style="left:4px;top:3px;width:6px;height:15px"></div><div class="lbl" style="left:11px;top:4px;width:54px;text-align:center;line-height:15px">Email</div></div><div class="btn" style="left:86px;top:141px;width:67px;height:24px"><div class="led r" style="left:4px;top:3px;width:6px;height:15px"></div><div class="lbl" style="left:11px;top:4px;width:54px;text-align:center;line-height:15px">SMS</div></div><div class="btn" style="left:161px;top:141px;width:67px;height:24px"><div class="led r" style="left:4px;top:3px;width:6px;height:15px"></div><div class="lbl" style="left:11px;top:4px;width:54px;text-align:center;line-height:15px">SNMP</div></div><div class="btn" style="left:236px;top:141px;width:85px;height:24px"><div class="led g" style="left:4px;top:3px;width:6px;height:15px"></div><div class="lbl" style="left:22px;top:4px;line-height:15px">GPO 2</div><svg style="left:71px;top:9px" width="8" height="6"><path d="M0 0.500H8L4 5Z" fill="#000"/></svg></div></div>
<div class="abs" style="left:254px;top:557px;width:332px;height:171px"><div class="fs" style="left:0;top:0;width:332px;height:171px"></div><div class="lg" style="left:11px;top:-9px">Pilot Alarm</div><div class="lbl" style="left:101px;top:13px;letter-spacing:0.8px">0</div><div class="lbl" style="left:160px;top:13px;width:100px;text-align:center">kHz</div><div class="lbl" style="left:223.500px;top:13px;width:100px;text-align:right;letter-spacing:0.8px">15</div><div style="left:104px;top:28px;width:210px;height:1px;background:repeating-linear-gradient(90deg,#666 0 1px,transparent 1px 4px)"></div><div style="left:104px;top:27px;width:210px;height:1px;background:repeating-linear-gradient(90deg,#999 0 1px,transparent 1px 8px)"></div><svg style="left:188.0px;top:34px" width="7" height="5"><path d="M0 0H7V1.300L3.500 5.200L0 1.300Z" fill="#000"/></svg><div class="lbl" style="left:6px;top:40px;font-size:13.300px;letter-spacing:0.15px">Range:</div><div class="lbl" style="left:6px;top:66px;font-size:13.300px;letter-spacing:0.05px">Thresholds:</div><div class="lbl" style="left:6px;top:92px;font-size:13.300px;letter-spacing:0.1px">Trigger time:</div><div class="lbl" style="left:6px;top:117px;font-size:13.300px;letter-spacing:-0.25px">Release time:</div><div class="trk" style="left:103px;top:40px;width:213px"></div><div class="fill" style="left:160.0px;top:40px;width:56.0px"></div><div class="hd" style="left:156.0px;top:37px;width:8px;border-radius:4.0px"></div><div class="hd" style="left:212.0px;top:37px;width:8px;border-radius:4.0px"></div><div class="btn" style="left:103px;top:59px;width:49px;height:19px"><div class="led g" style="left:4px;top:3px;width:6px;height:11px"></div><div class="lbl" style="left:16px;top:1px;line-height:15px">Low</div></div><div class="inp" style="left:156px;top:59px;width:36px;height:19px">4.0</div><div class="btn" style="left:237px;top:59px;width:49px;height:19px"><div class="led g" style="left:4px;top:3px;width:6px;height:11px"></div><div class="lbl" style="left:16px;top:1px;line-height:15px">High</div></div><div class="inp" style="left:290px;top:59px;width:36px;height:19px">8.0</div><div class="trk" style="left:103px;top:93px;width:134px"></div><div class="hd" style="left:170.0px;top:90px;width:8px;border-radius:4.0px"></div><div class="inp" style="left:245px;top:87px;width:48px;height:19px;padding-right:4px;letter-spacing:0.5px">05:00</div><div class="lbl" style="left:298px;top:88px">min</div><div class="trk" style="left:103px;top:119px;width:134px"></div><div class="hd" style="left:170.0px;top:116px;width:8px;border-radius:4.0px"></div><div class="inp" style="left:245px;top:113px;width:48px;height:19px;padding-right:4px;letter-spacing:0.5px">05:00</div><div class="lbl" style="left:298px;top:114px">min</div><div class="btn" style="left:11px;top:141px;width:67px;height:24px"><div class="led r" style="left:4px;top:3px;width:6px;height:15px"></div><div class="lbl" style="left:11px;top:4px;width:54px;text-align:center;line-height:15px">Email</div></div><div class="btn" style="left:86px;top:141px;width:67px;height:24px"><div class="led g" style="left:4px;top:3px;width:6px;height:15px"></div><div class="lbl" style="left:11px;top:4px;width:54px;text-align:center;line-height:15px">SMS</div></div><div class="btn" style="left:161px;top:141px;width:67px;height:24px"><div class="led r" style="left:4px;top:3px;width:6px;height:15px"></div><div class="lbl" style="left:11px;top:4px;width:54px;text-align:center;line-height:15px">SNMP</div></div><div class="btn" style="left:236px;top:141px;width:85px;height:24px"><div class="led r" style="left:4px;top:3px;width:6px;height:15px"></div><div class="lbl" style="left:22px;top:4px;line-height:15px">GPO -</div><svg style="left:71px;top:9px" width="8" height="6"><path d="M0 0.500H8L4 5Z" fill="#000"/></svg></div></div>
<div class="abs" style="left:596px;top:557px;width:332px;height:171px"><div class="fs" style="left:0;top:0;width:332px;height:171px"></div><div class="lg" style="left:11px;top:-9px">RDS Alarm</div><div class="lbl" style="left:101px;top:13px;letter-spacing:0.8px">0</div><div class="lbl" style="left:160px;top:13px;width:100px;text-align:center">kHz</div><div class="lbl" style="left:223.500px;top:13px;width:100px;text-align:right;letter-spacing:0.8px">15</div><div style="left:104px;top:28px;width:210px;height:1px;background:repeating-linear-gradient(90deg,#666 0 1px,transparent 1px 4px)"></div><div style="left:104px;top:27px;width:210px;height:1px;background:repeating-linear-gradient(90deg,#999 0 1px,transparent 1px 8px)"></div><svg style="left:194.0px;top:34px" width="7" height="5"><path d="M0 0H7V1.300L3.500 5.200L0 1.300Z" fill="#000"/></svg><div class="lbl" style="left:6px;top:40px;font-size:13.300px;letter-spacing:0.15px">Range:</div><div class="lbl" style="left:6px;top:66px;font-size:13.300px;letter-spacing:0.05px">Thresholds:</div><div class="lbl" style="left:6px;top:92px;font-size:13.300px;letter-spacing:0.1px">Trigger time:</div><div class="lbl" style="left:6px;top:117px;font-size:13.300px;letter-spacing:-0.25px">Release time:</div><div class="trk" style="left:103px;top:40px;width:213px"></div><div class="fill" style="left:181.0px;top:40px;width:84.5px"></div><div class="hd" style="left:177.0px;top:37px;width:8px;border-radius:4.0px"></div><div class="hd" style="left:262.0px;top:37px;width:7px;border-radius:3.5px"></div><div class="btn" style="left:103px;top:59px;width:49px;height:19px"><div class="led g" style="left:4px;top:3px;width:6px;height:11px"></div><div class="lbl" style="left:16px;top:1px;line-height:15px">Low</div></div><div class="inp" style="left:156px;top:59px;width:36px;height:19px">5.5</div><div class="btn" style="left:237px;top:59px;width:49px;height:19px"><div class="led g" style="left:4px;top:3px;width:6px;height:11px"></div><div class="lbl" style="left:16px;top:1px;line-height:15px">High</div></div><div class="inp" style="left:290px;top:59px;width:36px;height:19px">11.5</div><div class="trk" style="left:103px;top:93px;width:134px"></div><div class="hd" style="left:170.0px;top:90px;width:8px;border-radius:4.0px"></div><div class="inp" style="left:245px;top:87px;width:48px;height:19px;padding-right:4px;letter-spacing:0.5px">05:00</div><div class="lbl" style="left:298px;top:88px">min</div><div class="trk" style="left:103px;top:119px;width:134px"></div><div class="hd" style="left:170.0px;top:116px;width:8px;border-radius:4.0px"></div><div class="inp" style="left:245px;top:113px;width:48px;height:19px;padding-right:4px;letter-spacing:0.5px">05:00</div><div class="lbl" style="left:298px;top:114px">min</div><div class="btn" style="left:11px;top:141px;width:67px;height:24px"><div class="led r" style="left:4px;top:3px;width:6px;height:15px"></div><div class="lbl" style="left:11px;top:4px;width:54px;text-align:center;line-height:15px">Email</div></div><div class="btn" style="left:86px;top:141px;width:67px;height:24px"><div class="led g" style="left:4px;top:3px;width:6px;height:15px"></div><div class="lbl" style="left:11px;top:4px;width:54px;text-align:center;line-height:15px">SMS</div></div><div class="btn" style="left:161px;top:141px;width:67px;height:24px"><div class="led r" style="left:4px;top:3px;width:6px;height:15px"></div><div class="lbl" style="left:11px;top:4px;width:54px;text-align:center;line-height:15px">SNMP</div></div><div class="btn" style="left:236px;top:141px;width:85px;height:24px"><div class="led r" style="left:4px;top:3px;width:6px;height:15px"></div><div class="lbl" style="left:22px;top:4px;line-height:15px">GPO -</div><svg style="left:71px;top:9px" width="8" height="6"><path d="M0 0.500H8L4 5Z" fill="#000"/></svg></div></div>
</body></html>
